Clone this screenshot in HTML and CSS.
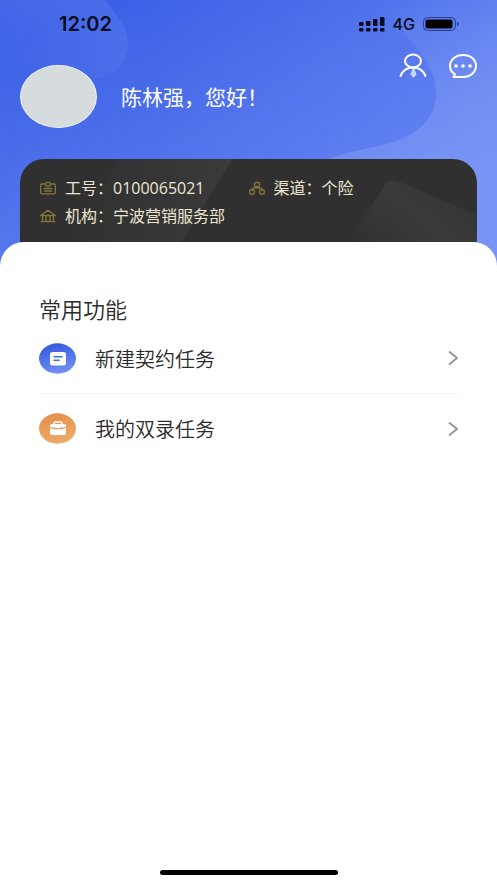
FILE: index.html
```html
<!DOCTYPE html>
<html lang="zh-CN">
<head>
<meta charset="utf-8">
<meta name="viewport" content="width=device-width, initial-scale=1">
<title>首页</title>
<link rel="stylesheet" href="styles.css">
</head>
<body>
<div class="app">
  <section class="hero">
    <svg class="hero-art" viewBox="0 0 497 270" preserveAspectRatio="none" aria-hidden="true">
      <defs>
        <linearGradient id="base" gradientUnits="userSpaceOnUse" x1="130" y1="0" x2="230" y2="270">
          <stop offset="0" stop-color="#3d61e6"/><stop offset="1" stop-color="#6080f0"/>
        </linearGradient>
        <linearGradient id="outer" gradientUnits="userSpaceOnUse" x1="390" y1="0" x2="480" y2="190">
          <stop offset="0" stop-color="#fff" stop-opacity="0"/><stop offset="1" stop-color="#a0b5ff" stop-opacity=".3"/>
        </linearGradient>
        <linearGradient id="blob" x1="0" y1="1" x2=".8" y2="0.3">
          <stop offset="0" stop-color="#6d8cf5" stop-opacity="0"/><stop offset="1" stop-color="#7896fa" stop-opacity=".2"/>
        </linearGradient>
        <linearGradient id="right" x1="0" y1="0" x2="1" y2="0">
          <stop offset="0" stop-color="#7e9bff" stop-opacity="0"/><stop offset="1" stop-color="#7e9bff" stop-opacity=".22"/>
        </linearGradient>
      </defs>
      <rect width="497" height="270" fill="url(#base)"/>
      <rect x="150" width="347" height="270" fill="url(#right)"/>
      <path d="M383 0C398 35 436 58 436 94C436 130 404 144 370 150C320 160 290 175 260 200V270H497V0Z" fill="url(#outer)"/>
      <path d="M0 0H105C116 15 128 26 128 44C128 62 117 76 99 79C60 82 40 64 0 62Z" fill="url(#blob)"/>
    </svg>

    <div class="status">
      <span class="status-time">12:02</span>
      <span class="status-side">
        <svg width="26" height="15" viewBox="0 0 26 15" aria-hidden="true">
          <g fill="#0a0d1c">
            <rect x="0" y="5" width="4.5" height="4" rx="1"/><rect x="7" y="4" width="4.5" height="5" rx="1"/><rect x="14" y="2" width="4.5" height="7" rx="1"/><rect x="21" y="0" width="4.5" height="9" rx="1"/>
            <rect x="0" y="11" width="4.5" height="3.5" rx="1"/><rect x="7" y="11" width="4.5" height="3.5" rx="1"/><rect x="14" y="11" width="4.5" height="3.5" rx="1"/><rect x="21" y="11" width="4.5" height="3.5" rx="1"/>
          </g>
        </svg>
        <span class="status-net">4G</span>
        <svg width="36" height="14" viewBox="0 0 36 14" aria-hidden="true">
          <rect x=".5" y=".5" width="32" height="13" rx="4" fill="none" stroke="#273b8e"/>
          <rect x="2.5" y="2.5" width="27" height="9" rx="2" fill="#000"/>
          <path d="M34 5q1.8 .6 1.8 2t-1.8 2z" fill="#273b8e"/>
        </svg>
      </span>
    </div>

    <header class="header">
      <span class="avatar"></span>
      <h1 class="greeting">陈林强，您好！</h1>
      <div class="actions">
        <button class="icon-button" type="button" aria-label="个人中心">
          <svg width="28" height="26" viewBox="0 0 28 26" fill="none" stroke="#fff" stroke-width="2" stroke-linecap="round" aria-hidden="true">
            <path d="M12.500 15h4l-.6 2 1.800 4.500-3.200 3.500-3.200-3.500 1.800-4.500z" fill="#c6d3fb" stroke="none"/>
            <ellipse cx="14" cy="8" rx="8" ry="6.500"/>
            <path d="M1.500 23C4 17 9 14.500 14 14.500S24 17 26.500 23"/>
          </svg>
        </button>
        <button class="icon-button" type="button" aria-label="消息">
          <svg width="28" height="26" viewBox="0 0 28 26" fill="none" stroke="#fff" stroke-width="2" stroke-linecap="round" stroke-linejoin="round" aria-hidden="true">
            <path d="M4.500 24H14C21.500 24 27 19 27 12.800S21.500 2 14 2 1 6.800 1 13c0 3.500 1.800 6.400 5 8.300z"/>
            <g fill="#fff" stroke="none"><circle cx="7" cy="13" r="1.800"/><circle cx="14" cy="13" r="1.800"/><circle cx="21" cy="13" r="1.800"/></g>
          </svg>
        </button>
      </div>
    </header>

    <div class="card">
      <svg class="card-art" viewBox="0 0 456 83" preserveAspectRatio="none" aria-hidden="true">
        <defs>
          <linearGradient id="shineA" x1="0" y1="0" x2="1" y2="0"><stop offset="0" stop-color="#fff" stop-opacity="0"/><stop offset="1" stop-color="#fff" stop-opacity=".05"/></linearGradient>
          <linearGradient id="shineB" x1="0" y1="1" x2="1" y2="0.4"><stop offset="0" stop-color="#fff" stop-opacity="0"/><stop offset=".6" stop-color="#fff" stop-opacity=".05"/><stop offset="1" stop-color="#fff" stop-opacity=".02"/></linearGradient>
        </defs>
        <path d="M100 0H212L166 75Q162 83 155 83H60L48 75Z" fill="url(#shineA)"/>
        <path d="M328 83L365 25Q369 19 377 22L456 56V83Z" fill="url(#shineB)"/>
      </svg>
      <dl class="facts">
        <div class="fact">
          <svg class="fact-icon" viewBox="0 0 16 14" aria-hidden="true"><path d="M5.500 3H2Q.7 3 .7 4.300V11.500Q.7 12.800 2 12.800H14Q15.300 12.800 15.300 11.500V4.300Q15.300 3 14 3H10.500M4 7.500H12M4 10H12"/><ellipse cx="8" cy="3.200" rx="2.200" ry="2"/></svg>
          <dt>工号：</dt><dd>0100065021</dd>
        </div>
        <div class="fact">
          <svg class="fact-icon" viewBox="0 0 16 14" aria-hidden="true"><rect x="5.500" y="1.500" width="5" height="4" rx="1"/><rect x=".7" y="9" width="4.600" height="4" rx="1"/><rect x="10.700" y="9" width="4.600" height="4" rx="1"/><path d="M8 5.500L8 7M3 9Q3 7 5 7H11Q13 7 13 9"/></svg>
          <dt>渠道：</dt><dd>个险</dd>
        </div>
        <div class="fact">
          <svg class="fact-icon" viewBox="0 0 16 14" aria-hidden="true"><path d="M.7 6.500L8 1.200 15.300 6.500ZM2.500 6.500V12.500M6 12.500V6.500M10 6.500V12.500M13.500 6.500V12.500M.7 12.700H15.300"/></svg>
          <dt>机构：</dt><dd>宁波营销服务部</dd>
        </div>
      </dl>
    </div>
  </section>

  <main class="sheet">
    <h2 class="sheet-title">常用功能</h2>
    <nav class="menu">
      <a class="menu-item" href="#new">
        <svg class="menu-icon" width="37" height="31" viewBox="0 0 37 31" aria-hidden="true">
          <defs><linearGradient id="blue" x1=".3" y1="0" x2=".6" y2="1"><stop offset="0" stop-color="#3459dd"/><stop offset="1" stop-color="#7391f5"/></linearGradient></defs>
          <ellipse cx="18.500" cy="15.500" rx="18.500" ry="15.200" fill="url(#blue)"/>
          <rect x="11" y="9" width="16" height="13.500" rx="2.500" fill="#fff"/>
          <path d="M15 13.700H23M15 17.200H20" stroke="#4268e4" stroke-width="1.500" stroke-linecap="round"/>
        </svg>
        <span class="menu-label">新建契约任务</span>
        <svg class="chevron" width="10" height="16" viewBox="0 0 10 16" aria-hidden="true"><path d="M1 1.500L9 8L1 14.500"/></svg>
      </a>
      <a class="menu-item" href="#mine">
        <svg class="menu-icon" width="37" height="31" viewBox="0 0 37 31" aria-hidden="true">
          <defs><linearGradient id="orange" x1=".3" y1="0" x2=".6" y2="1"><stop offset="0" stop-color="#e6914b"/><stop offset="1" stop-color="#edaa69"/></linearGradient></defs>
          <ellipse cx="18.500" cy="15.500" rx="18.500" ry="15.200" fill="url(#orange)"/>
          <path d="M15 11.500V10.500Q15 9 16.500 9H21.500Q23 9 23 10.500V11.500" fill="none" stroke="#fff" stroke-width="1.300"/>
          <path d="M13 11H25Q27 11 27 13V14L19 15.300 11 14V13Q11 11 13 11ZM11 15.200L19 16.500 27 15.200V20Q27 22 25 22H13Q11 22 11 20Z" fill="#fff"/>
          <path d="M15.300 14V16.500M22.700 14V16.500" stroke="#e9a05c"/>
        </svg>
        <span class="menu-label">我的双录任务</span>
        <svg class="chevron" width="10" height="16" viewBox="0 0 10 16" aria-hidden="true"><path d="M1 1.500L9 8L1 14.500"/></svg>
      </a>
    </nav>
    <div class="home-bar"></div>
  </main>
</div>
</body>
</html>
```
FILE: styles.css
```css
* {
  box-sizing: border-box;
}

body {
  margin: 0;
  background: #fff;
  color: #2b2b2b;
  font-family: "Noto Sans CJK SC", sans-serif;
  font-weight: 350;
}

h1, h2, dl, dd {
  margin: 0;
  font-weight: inherit;
}

.app {
  display: flex;
  flex-direction: column;
  min-height: 100vh;
}

.hero {
  position: relative;
  padding: 0 20px 24px;
}

.hero-art {
  position: absolute;
  inset: 0;
  width: 100%;
  height: 100%;
}

.status {
  position: relative;
  display: flex;
  align-items: center;
  justify-content: space-between;
  height: 48px;
  padding: 0 18px 0 39px;
  color: #0a0d1c;
  font-family: Inter, sans-serif;
}

.status-time {
  font-size: 20px;
  font-weight: 600;
}

.status-side {
  display: flex;
  align-items: center;
  gap: 8px;
}

.status-net {
  font-size: 16px;
  font-weight: 500;
}

.header {
  position: relative;
  display: flex;
  align-items: flex-end;
  height: 80px;
}

.avatar {
  width: 77px;
  height: 63px;
  border: 1px solid #eef2fd;
  border-radius: 50%;
  background: #d6dbde;
}

.greeting {
  flex: 1;
  margin-left: 24px;
  color: #fff;
  font-size: 21px;
  font-weight: 400;
  line-height: 63px;
  white-space: nowrap;
}

.actions {
  display: flex;
  align-self: flex-start;
  gap: 22px;
  padding-top: 5px;
}

.icon-button {
  display: flex;
  padding: 0;
  border: 0;
  background: none;
}

.card {
  position: relative;
  overflow: hidden;
  margin-top: 31px;
  padding: 15px 20px 12px;
  border-radius: 24px 24px 0 0;
  background: #303030;
}

.card-art {
  position: absolute;
  inset: 0;
  width: 100%;
  height: 100%;
}

.facts {
  position: relative;
  display: grid;
  grid-template-columns: 1fr 1fr;
  color: #ece6d0;
  font-family: "Open Sans", "Noto Sans CJK SC", sans-serif;
  font-size: 16px;
  font-weight: 400;
  line-height: 28px;
}

.fact {
  display: flex;
  align-items: center;
  white-space: nowrap;
}

.fact-icon {
  width: 16px;
  height: 14px;
  margin-right: 9px;
  fill: none;
  stroke: #87743a;
  stroke-width: 1.3;
}

.sheet {
  position: relative;
  display: flex;
  flex: 1;
  flex-direction: column;
  margin-top: -24px;
  padding: 51px 39px 8px;
  border-radius: 24px 24px 0 0;
  background: #fff;
}

.sheet-title {
  font-size: 22px;
  line-height: 30px;
}

.menu-item {
  display: flex;
  align-items: center;
  height: 70px;
  color: inherit;
  text-decoration: none;
}

.menu-item + .menu-item {
  border-top: 1px solid #f3f3f3;
}

.menu-label {
  flex: 1;
  margin-left: 19px;
  font-size: 20px;
}

.chevron {
  fill: none;
  stroke: #979797;
  stroke-width: 2;
}

.home-bar {
  align-self: center;
  width: 178px;
  height: 5px;
  margin-top: auto;
  border-radius: 3px;
  background: #000;
}
```
